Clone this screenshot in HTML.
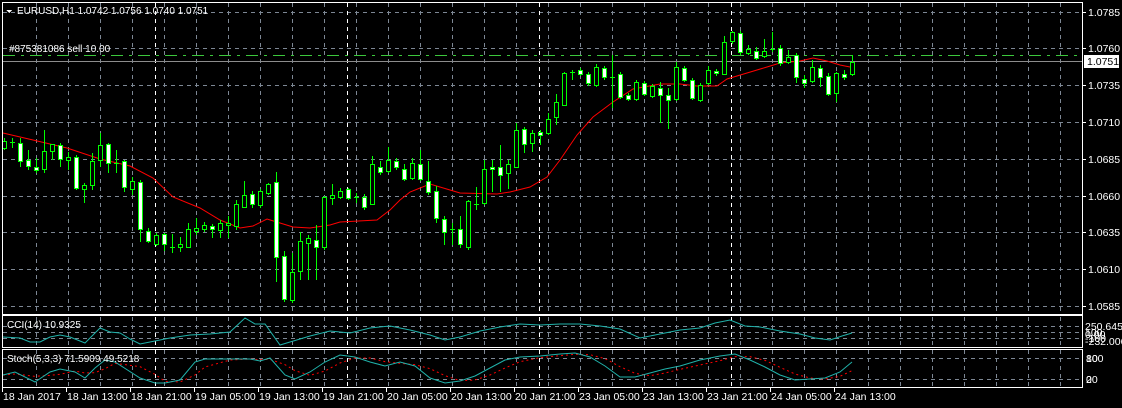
<!DOCTYPE html>
<html><head><meta charset="utf-8"><style>
html,body{margin:0;padding:0;background:#000;width:1122px;height:408px;overflow:hidden}
svg{display:block}
text{font-family:"Liberation Sans",sans-serif;font-size:10.5px;fill:#fff}
</style></head><body>
<svg id="s" width="1122" height="408" xmlns="http://www.w3.org/2000/svg" shape-rendering="crispEdges"></svg>
<script>
const S=document.getElementById('s');let h='';
const grid='#7d8794';
const py=[[12,'1.0785'],[48,'1.0760'],[85,'1.0735'],[122,'1.0710'],[159,'1.0685'],[196,'1.0660'],[232,'1.0635'],[269,'1.0610'],[306,'1.0585']];
py.forEach(p=>{h+=`<line x1="3" y1="${p[0]+.5}" x2="1082" y2="${p[0]+.5}" stroke="${grid}" stroke-dasharray="4,4"/>`;});
[326,332,338,358,379].forEach(y=>{h+=`<line x1="3" y1="${y+.5}" x2="1082" y2="${y+.5}" stroke="${grid}" stroke-dasharray="4,4"/>`;});
const panels=[[3,314],[317,347],[350,387]];
for(let x=36;x<1082;x+=32){panels.forEach(p=>{h+=`<line x1="${x+.5}" y1="${p[0]}" x2="${x+.5}" y2="${p[1]}" stroke="${grid}" stroke-dasharray="4,4"/>`;});}
[155,347,539,731].forEach(x=>{panels.forEach(p=>{h+=`<line x1="${x+.5}" y1="${p[0]}" x2="${x+.5}" y2="${p[1]}" stroke="#fff" stroke-dasharray="4,4"/>`;});});
h+=`<line x1="3" y1="55.5" x2="1082" y2="55.5" stroke="#3cc83c" stroke-dasharray="12,6,3,6"/>`;
h+=`<line x1="3" y1="61.5" x2="1082" y2="61.5" stroke="#8c8c8c"/>`;
const ma=[[3,133],[33,140],[67,148],[100,159],[130,166],[153,178],[173,197],[200,208],[220,220],[240,228],[253,226],[267,219],[280,223],[293,227],[310,228],[330,225],[340,222],[377,220],[390,210],[400,200],[410,192],[430,184],[450,190],[460,193],[497,194],[510,192],[530,187],[547,177],[560,160],[577,135],[593,117],[613,102],[633,89],[660,84],[680,84],[697,86],[717,86],[727,79],[747,73],[767,67],[780,63],[800,61],[813,58],[827,61],[840,65],[850,67]];
h+=`<polyline fill="none" stroke="#ff0000" stroke-width="1" shape-rendering="auto" points="${ma.map(p=>p.join(',')).join(' ')}"/>`;
const c=[[148,141,138,150],[142,142,138,148],[143,161,138,167],[160,166,150,170],[167,170,158,173],[169,151,130,173],[151,144,144,160],[145,159,143,167],[160,157,152,170],[157,188,155,190],[189,185,183,203],[185,161,153,190],[160,145,133,167],[144,163,143,173],[163,163,150,173],[161,187,160,192],[189,181,177,195],[182,229,180,242],[231,241,228,243],[244,235,233,246],[234,244,233,251],[247,247,234,253],[247,244,237,252],[247,229,223,248],[231,228,218,235],[229,225,222,232],[226,229,224,238],[230,223,220,238],[225,223,216,238],[226,204,200,230],[207,195,181,208],[194,204,191,208],[205,191,189,208],[193,184,183,195],[182,257,172,282],[256,299,251,302],[300,272,253,303],[271,241,232,280],[243,238,235,280],[240,247,225,280],[247,197,196,250],[198,195,184,205],[197,191,188,199],[189,198,188,200],[197,197,193,203],[197,207,194,210],[204,164,156,205],[167,172,161,175],[171,160,147,173],[161,167,158,170],[169,179,164,181],[178,163,158,180],[164,179,150,181],[181,192,161,195],[191,218,186,223],[219,232,216,245],[229,229,223,245],[229,244,216,248],[247,201,200,250],[204,204,187,210],[203,169,160,205],[167,169,160,192],[167,175,145,192],[173,164,160,189],[167,130,123,168],[129,144,127,153],[143,133,130,152],[132,135,130,145],[133,119,113,135],[117,102,94,125],[105,73,72,106],[72,72,70,80],[70,74,68,76],[74,83,72,86],[85,67,64,87],[68,77,66,80],[77,77,55,108],[74,97,72,99],[95,99,93,101],[99,82,80,101],[83,94,81,96],[96,86,84,98],[88,95,82,123],[95,100,88,129],[99,67,62,101],[68,80,66,82],[80,98,78,100],[100,85,83,102],[83,70,66,85],[71,73,69,76],[74,42,36,75],[41,32,31,44],[33,52,31,55],[53,49,45,55],[51,58,47,60],[56,51,39,58],[49,50,32,52],[48,63,45,66],[62,57,50,64],[55,77,53,83],[79,83,75,88],[81,67,60,83],[68,77,65,87],[76,94,73,96],[93,73,72,102],[74,77,70,80],[74,62,55,76]];
const G='#00ff00';
c.forEach((d,k)=>{const x=4+8*k;const[o,cl,hi,lo]=d;const t=Math.min(o,cl),b=Math.max(o,cl);
h+=`<line x1="${x+.5}" y1="${hi}" x2="${x+.5}" y2="${lo}" stroke="${G}"/>`;
if(b-t<2){h+=`<line x1="${x-2}" y1="${t+.5}" x2="${x+3}" y2="${t+.5}" stroke="${G}"/>`;}
else{h+=`<rect x="${x-1.5}" y="${t+.5}" width="4" height="${b-t}" fill="${cl>o?'#fff':'#000'}" stroke="${G}"/>`;}
});
const cci=[[3,337],[20,338],[30,342],[40,342],[50,337],[60,335],[70,337],[80,341],[85,343],[100,328],[110,332],[120,333],[130,339],[140,344],[150,342],[170,338],[190,335],[210,334],[230,332],[245,318],[255,324],[265,324],[280,345],[290,342],[310,336],[330,331],[350,333],[370,328],[390,326],[410,330],[430,335],[445,340],[460,337],[480,331],[500,327],[520,324],[540,325],[560,324],[580,324],[600,326],[620,329],[640,338],[660,334],[680,330],[700,328],[715,323],[730,320],[745,326],[760,327],[780,331],[800,334],[815,338],[830,340],[842,336],[852,333]];
h+=`<polyline fill="none" stroke="#20b2aa" shape-rendering="auto" points="${cci.map(p=>p.join(',')).join(' ')}"/>`;
const st=[[3,375],[15,372],[35,382],[50,372],[60,369],[75,372],[85,378],[95,368],[105,360],[115,362],[140,378],[155,383],[165,383],[180,380],[195,362],[205,359],[230,359],[250,359],[260,361],[270,358],[285,375],[295,379],[310,372],[325,362],[340,355],[355,357],[370,362],[385,366],[400,362],[415,366],[430,378],[445,383],[460,381],[475,376],[490,368],[505,360],[520,357],[540,356],[560,354],[575,353],[590,357],[605,366],[620,377],[635,377],[650,373],[665,369],[680,366],[700,360],[720,356],[735,354],[750,360],[765,367],[780,375],[795,380],[810,379],[825,378],[840,372],[852,362]];
const sig=st.map((p,i)=>[p[0],(st[Math.max(0,i-1)][1]+st[Math.max(0,i-2)][1]+p[1])/3]);
h+=`<polyline fill="none" stroke="#ff0000" stroke-dasharray="2,3" shape-rendering="auto" points="${sig.map(p=>p.join(',')).join(' ')}"/>`;
h+=`<polyline fill="none" stroke="#20b2aa" shape-rendering="auto" points="${st.map(p=>p.join(',')).join(' ')}"/>`;
h+=`<rect x="2.5" y="2.5" width="1080" height="312" fill="none" stroke="#fff"/>`;
h+=`<rect x="2.5" y="315.5" width="1080" height="32" fill="none" stroke="#fff"/>`;
h+=`<rect x="2.5" y="349.5" width="1080" height="38" fill="none" stroke="#fff"/>`;
h+=`<path d="M6 10 L12 10 L9 13 Z" fill="#fff"/>`;
h+=`<text x="17" y="14" style="font-size:10px">EURUSD,H1  1.0742 1.0756 1.0740 1.0751</text>`;
h+=`<text x="9" y="52" style="font-size:10px">#875381086 sell 10.00</text>`;
h+=`<text x="7" y="328" style="font-size:10px">CCI(14) 10.9325</text>`;
h+=`<text x="7" y="362" style="font-size:10px">Stoch(5,3,3) 71.5909 49.5218</text>`;
py.forEach(p=>{h+=`<line x1="1082" y1="${p[0]+.5}" x2="1086" y2="${p[0]+.5}" stroke="#fff"/><text x="1088" y="${p[0]+4}">${p[1]}</text>`;});
h+=`<rect x="1084" y="55" width="35" height="13" fill="#fff"/><text x="1087" y="65" style="fill:#000">1.0751</text>`;
[[326,'250.6452'],[332,'100'],[334,'0.00'],[338,'-100'],[341,'-232.006']].forEach(p=>{h+=`<text x="1085" y="${p[0]+4}">${p[1]}</text>`;});
[[358,'100'],[358,'80'],[379,'20'],[379,'0']].forEach(p=>{h+=`<text x="1086" y="${p[0]+4}">${p[1]}</text>`;});
const tl=['18 Jan 2017','18 Jan 13:00','18 Jan 21:00','19 Jan 05:00','19 Jan 13:00','19 Jan 21:00','20 Jan 05:00','20 Jan 13:00','20 Jan 21:00','23 Jan 05:00','23 Jan 13:00','23 Jan 21:00','24 Jan 05:00','24 Jan 13:00'];
tl.forEach((t,i)=>{const x=2+64*i;h+=`<line x1="${x+.5}" y1="388" x2="${x+.5}" y2="392" stroke="#fff"/><text x="${x+1}" y="400">${t}</text>`;});
S.innerHTML=h;
</script>
</body></html>
